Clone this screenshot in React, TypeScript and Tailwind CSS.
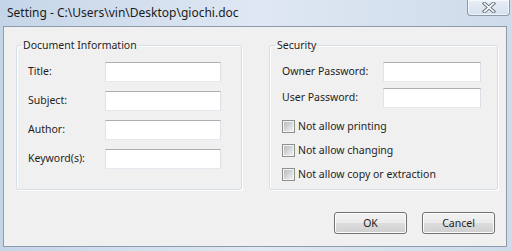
import type { ReactNode } from "react";

const font = { fontFamily: '"Noto Sans", "Open Sans", sans-serif' };

export default function App() {
  return (
    <div
      className="flex h-[251px] w-[512px] flex-col overflow-hidden bg-gradient-to-r from-[#c5d5e8] via-[#dfe8f3] to-[#cddbea] text-[10px] text-[#1e1e1e]"
      style={font}
    >
      <TitleBar />
      <div className="ml-[3px] mr-[5px] mb-[4px] flex flex-1 flex-col border border-[#8d9bac] bg-[#f0f0f0] pl-[12px] pt-[10px]">
        <div className="flex gap-[27px]">
          <GroupBox title="Document Information" className="w-[226px] pl-[11px]">
            <div className="flex flex-col gap-[9px] pt-[9px]">
              <FieldRow label="Title:" labelWidth="w-[77px]" inputWidth="w-[116px]" />
              <FieldRow label="Subject:" labelWidth="w-[77px]" inputWidth="w-[116px]" />
              <FieldRow label="Author:" labelWidth="w-[77px]" inputWidth="w-[116px]" />
              <FieldRow label="Keyword(s):" labelWidth="w-[77px]" inputWidth="w-[116px]" />
            </div>
          </GroupBox>
          <GroupBox title="Security" className="w-[229px] pl-[12px]">
            <div className="flex flex-col pt-[9px]">
              <FieldRow label="Owner Password:" labelWidth="w-[101px]" inputWidth="w-[98px]" />
              <div className="mt-[6px]">
                <FieldRow label="User Password:" labelWidth="w-[101px]" inputWidth="w-[98px]" />
              </div>
              <div className="mt-[6px] flex flex-col">
                <CheckRow label="Not allow printing" />
                <CheckRow label="Not allow changing" />
                <CheckRow label="Not allow copy or extraction" />
              </div>
            </div>
          </GroupBox>
        </div>
        <div className="mt-[22px] flex justify-end gap-[15px] pr-[11px]">
          <Button>OK</Button>
          <Button>Cancel</Button>
        </div>
      </div>
    </div>
  );
}

function TitleBar() {
  return (
    <div className="flex h-[26px] shrink-0 items-start">
      <span className="mt-[5px] ml-[7px] text-[12px] leading-[16px] text-[#1b1b1b]">
        Setting - C:\Users\vin\Desktop\giochi.doc
      </span>
      <div className="ml-auto mr-[2px] flex h-[16px] w-[43px] items-center justify-center rounded-b-[4px] border border-t-0 border-[#8c99ab] bg-gradient-to-b from-[#e9eff7] to-[#d5e0ec] shadow-[inset_0_0_0_1px_rgba(255,255,255,0.6)]">
        <svg width="14" height="11" viewBox="0 0 14 11">
          <path d="M2.5 1.5 L11.5 9.5 M11.5 1.5 L2.5 9.5" stroke="#6f7783" strokeWidth="3.6" strokeLinecap="square" />
          <path d="M2.5 1.5 L11.5 9.5 M11.5 1.5 L2.5 9.5" stroke="#ffffff" strokeWidth="1.6" strokeLinecap="square" />
        </svg>
      </div>
    </div>
  );
}

function GroupBox({ title, className, children }: { title: string; className: string; children: ReactNode }) {
  return (
    <fieldset
      className={`h-[153px] rounded-[3px] border border-[#d5dfe5] shadow-[inset_1px_1px_0_#ffffff,1px_1px_0_#ffffff] ${className}`}
    >
      <legend className="-ml-[6px] px-[1px] text-[10.5px] leading-[16px]">{title}</legend>
      {children}
    </fieldset>
  );
}

function FieldRow({ label, labelWidth, inputWidth }: { label: string; labelWidth: string; inputWidth: string }) {
  return (
    <div className="flex h-[20px] items-center">
      <span className={`${labelWidth} shrink-0 text-[10.5px]`}>{label}</span>
      <div
        className={`${inputWidth} h-[20px] border border-t-[#abadb3] border-r-[#dbdfe6] border-b-[#e3e9ef] border-l-[#e2e3ea] bg-white`}
      />
    </div>
  );
}

function CheckRow({ label }: { label: string }) {
  return (
    <div className="flex h-[24px] items-center">
      <span className="flex h-[13px] w-[13px] shrink-0 items-center justify-center border border-[#8e8f8f] bg-[#f4f4f4]">
        <span className="h-[9px] w-[9px] bg-gradient-to-br from-[#b9bdc2] to-[#f0f0f0]" />
      </span>
      <span className="ml-[3px] text-[10.5px] leading-[16px]">{label}</span>
    </div>
  );
}

function Button({ children }: { children: ReactNode }) {
  return (
    <button className="flex h-[22px] w-[73px] items-center justify-center rounded-[3px] border border-[#707070] bg-[linear-gradient(to_bottom,#f2f2f2_0%,#ebebeb_50%,#dddddd_50%,#cfcfcf_100%)] shadow-[inset_0_0_0_1px_#fcfcfc] text-[10.5px] leading-[16px] text-[#1e1e1e]">
      {children}
    </button>
  );
}
